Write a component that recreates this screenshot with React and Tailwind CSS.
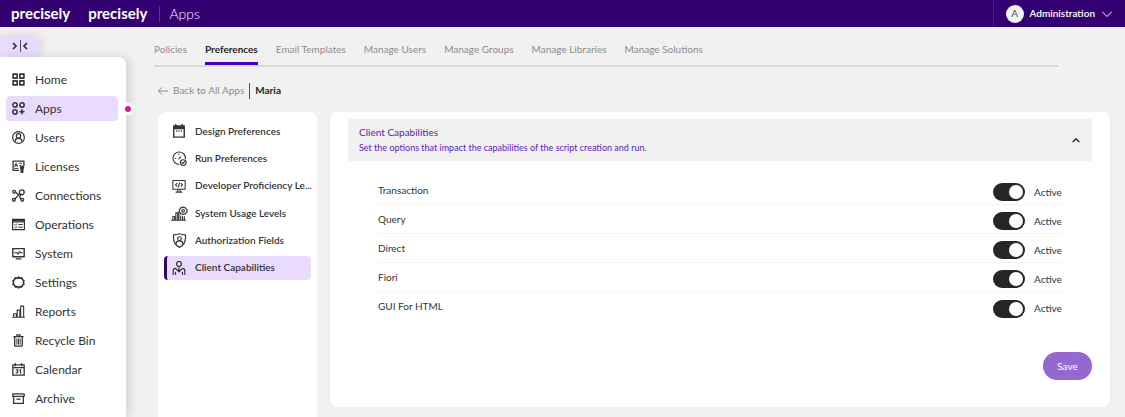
import { useState } from "react"

function Icon({ children, className = "w-[13px] h-[13px]", strokeWidth = 2.4 }) {
    return (
        <svg
            className={`shrink-0 ${className}`}
            fill="none"
            viewBox="0 0 24 24"
            stroke="currentColor"
            strokeWidth={strokeWidth}
            strokeLinecap="round"
            strokeLinejoin="round"
            aria-hidden="true"
        >
            {children}
        </svg>
    )
}

const IconHome = (
    <Icon strokeWidth={3}>
        <path d="M2 2h7.5v7.5H2zM14.5 2H22v7.5h-7.5zM2 14.5h7.5V22H2zM14.5 14.5H22V22h-7.5z" />
    </Icon>
)

const IconApps = (
    <Icon strokeWidth={2.8}>
        <circle cx="5.500" cy="5.500" r="4" />
        <circle cx="18.500" cy="5.500" r="4" />
        <circle cx="5.500" cy="18.500" r="4" />
        <path d="M18.500 14.500v7M15 18h7" />
    </Icon>
)

const IconUsers = (
    <Icon strokeWidth={2.2}>
        <circle cx="12" cy="12" r="10.800" />
        <circle cx="12" cy="9" r="4" />
        <path d="M5.500 19c1-7 12-7 13 0" />
    </Icon>
)

const IconLicenses = (
    <Icon>
        <path d="M12 19H2V2h20v8" />
        <path d="M5 12l2.500-6L10 12M6 10h3M14 6h4M14 10h2M5 15.500h6" strokeWidth={1.8} />
        <circle cx="18.500" cy="14" r="2.800" fill="currentColor" />
        <path d="M17 17.500V23l1.500-1L20 23v-5.500" fill="currentColor" />
    </Icon>
)

const IconConnections = (
    <Icon>
        <circle cx="4" cy="5" r="2.600" />
        <circle cx="18" cy="6" r="4.500" />
        <circle cx="3.500" cy="20" r="2.600" />
        <circle cx="19" cy="20" r="2.600" />
        <path d="M7 6l5 5M14.500 9L5.500 18M16.500 10.500c-3 3-3 6 .5 8" />
    </Icon>
)

const IconOperations = (
    <Icon>
        <path d="M1 2.500h22v19H1zM1 7h22" />
        <path d="M1 4.500h22" />
        <path d="M5 12l1.500 1L9 11M5 17l1.500 1L9 16M12.500 12H19M12.500 17H19" strokeWidth={1.8} />
    </Icon>
)

const IconSystem = (
    <Icon strokeWidth={2.6}>
        <path d="M1.500 3h21v15h-21zM8 22h8" />
        <path d="M5 10.500h4l2 2.500 3-4.500 2 2h3" strokeWidth={2} />
    </Icon>
)

const IconSettings = (
    <Icon strokeWidth={3}>
        <path d="M12 2l2.500 2.300 3.500-.8 1.300 3.200 2.700 1.800-1 3.500 1 3.500-2.800 1.700-1.400 3-3.400-.5L12 22 9.600 19.700l-3.400.5-1.400-3L2 15.500 3 12 2 8.500l2.700-1.800L6 3.500l3.500.8z" />
    </Icon>
)

const IconReports = (
    <Icon strokeWidth={2}>
        <path d="M1 22.500h22M3 22v-6h5v6M9.500 22V9.500h5V22M16 22V2h5.500v20" />
    </Icon>
)

const IconBin = (
    <Icon>
        <path d="M3.500 5h17M9 4.500V1.500h6v3M5 5v16c0 1 .5 1.500 1.500 1.500h11c1 0 1.500-.5 1.500-1.500V5" />
        <path d="M9 9v10M12 9v10M15 9v10" strokeWidth={1.8} />
    </Icon>
)

const IconCalendar = (
    <Icon>
        <path d="M1.500 3.500h21v19h-21zM1.500 8.500h21M6 1v4M18 1v4" />
        <path d="M7.500 12.500h3.500l-1.500 2.500c3 0 2 4-2 3M14 13.500l2-1V19" strokeWidth={2} />
    </Icon>
)

const IconArchive = (
    <Icon>
        <path d="M1.500 3.500h21v4.500h-21zM3 8v13h18V8M9 13h6" />
    </Icon>
)

const IconDesign = (
    <Icon className="w-[14px] h-[14px]">
        <path d="M3 3.500h18V22.500H3zM3 8h18M3 5.500h18M6.500 1v3M17.500 1v3" />
        <path d="M8 12h.1M12 12h.1M16 12h.1" />
    </Icon>
)

const IconRun = (
    <Icon className="w-[15px] h-[15px]" strokeWidth={1.8}>
        <path d="M11 21.500A10 10 0 1 1 21.500 12" />
        <path d="M11 12.500l3-3M5.500 12h.5M11 5.500V5" />
        <circle cx="18" cy="18.500" r="4.600" />
        <path d="M16 18.500l1.500 1.500 2.700-3" />
    </Icon>
)

const IconDeveloper = (
    <Icon className="w-[14px] h-[14px]" strokeWidth={1.8}>
        <path d="M1.500 2.500h21v15h-21zM7 22.500h10M10 18v4M14 18v4" />
        <path d="M8.500 7.500L6 10l2.500 2.500M15.500 7.500L18 10l-2.500 2.500M13 6.500l-2 7" />
    </Icon>
)

const IconUsage = (
    <svg
        className="shrink-0 w-[17px] h-[15px]"
        viewBox="0 0 28 24"
        fill="none"
        stroke="currentColor"
        strokeWidth={1.8}
        strokeLinecap="round"
        strokeLinejoin="round"
        aria-hidden="true"
    >
        <path d="M1 23h23M3 23v-6h3v6M8 23V11h3v12M13 23V9M16 16v7M19 17v6M22 17v6" />
        <circle cx="20" cy="7.500" r="2.200" />
        <path d="M20 1l1.700 1.500 2.200-.3.700 2.100 2 1.100-.8 2.100.8 2.100-2 1.100-.7 2.100-2.200-.3L20 14l-1.700-1.500-2.200.3-.7-2.100-2-1.100.8-2.100-.8-2.100 2-1.100.7-2.100 2.200.3z" />
    </svg>
)

const IconAuthorization = (
    <Icon className="w-[15px] h-[15px]" strokeWidth={1.8}>
        <path d="M12 1c3 2 6 2 9.500 2 1 9-1 16-9.500 20C3.500 19 1.500 12 2.500 3 6 3 9 3 12 1z" />
        <circle cx="12" cy="9" r="3" />
        <path d="M6.500 17c.5-6 10.500-6 11 0" />
    </Icon>
)

const IconClient = (
    <Icon className="w-[14px] h-[14px]" strokeWidth={2}>
        <circle cx="12" cy="5" r="4.200" />
        <path d="M2 23v-6c0-3 1.500-4.500 4-4.500l6 6 6-6c2.500 0 4 1.500 4 4.500v6M12 10v8M6 19.500V23M18 19.500V23M9.500 15l2.500 3 2.500-3" />
    </Icon>
)

const menu = [
    { label: "Home", icon: IconHome },
    { label: "Apps", icon: IconApps },
    { label: "Users", icon: IconUsers },
    { label: "Licenses", icon: IconLicenses },
    { label: "Connections", icon: IconConnections },
    { label: "Operations", icon: IconOperations },
    { label: "System", icon: IconSystem },
    { label: "Settings", icon: IconSettings },
    { label: "Reports", icon: IconReports },
    { label: "Recycle Bin", icon: IconBin },
    { label: "Calendar", icon: IconCalendar },
    { label: "Archive", icon: IconArchive }
]

const tabs = [
    "Policies",
    "Preferences",
    "Email Templates",
    "Manage Users",
    "Manage Groups",
    "Manage Libraries",
    "Manage Solutions"
]

const sections = [
    { label: "Design Preferences", icon: IconDesign },
    { label: "Run Preferences", icon: IconRun },
    { label: "Developer Proficiency Le...", icon: IconDeveloper },
    { label: "System Usage Levels", icon: IconUsage },
    { label: "Authorization Fields", icon: IconAuthorization },
    { label: "Client Capabilities", icon: IconClient }
]

const capabilities = ["Transaction", "Query", "Direct", "Fiori", "GUI For HTML"]

function Header() {
    return (
        <header className="h-[27px] bg-[#330072] text-white flex items-stretch justify-between">
            <div className="flex items-center pl-[11px]">
                <span className="font-bold text-[15px] leading-5 pb-[2px]">precisely</span>
                <span className="font-bold text-[15px] leading-5 pb-[2px] ml-[18px]">precisely</span>
                <span className="w-px h-4 bg-[#5c3590] ml-3 mr-[9px]" />
                <span className="text-sm font-light">Apps</span>
            </div>
            <button type="button" className="flex items-center border-l border-[#4a1d85] pl-3 pr-[13px] cursor-pointer">
                <span className="w-[18px] h-[18px] rounded-full bg-[#f2f2f2] text-gray-600 text-[10px] flex items-center justify-center">A</span>
                <span className="text-[10px] font-semibold ml-[6px] mr-[7px]">Administration</span>
                <Icon className="w-[10px] h-[10px]">
                    <path d="M1 7l11 11L23 7" />
                </Icon>
            </button>
        </header>
    )
}

function Sidebar() {
    const [actif, setActif] = useState("Apps")

    return (
        <aside className="w-[126px] shrink-0 pt-2 flex flex-col">
            <button
                type="button"
                aria-label="Collapse menu"
                className="w-[39px] h-[22px] bg-[#e9dbfd] rounded-tr-md shadow-[2px_0_8px_rgba(0,0,0,0.12)] flex items-center justify-center text-gray-800 cursor-pointer"
            >
                <svg className="w-4 h-3" viewBox="0 0 16 12" fill="none" stroke="currentColor" aria-hidden="true">
                    <path d="M1 3l3 3-3 3M15 3l-3 3 3 3" strokeWidth="1.600" />
                    <path d="M8.500 0v12" strokeWidth="0.800" />
                </svg>
            </button>
            <nav className="grow bg-white rounded-tr-lg shadow-[4px_0_10px_rgba(0,0,0,0.12)] pt-[10px] pl-[6px] pr-2 flex flex-col gap-1">
                {menu.map(({ label, icon }) => (
                    <a
                        key={label}
                        href="#"
                        onClick={() => setActif(label)}
                        className={`relative h-[25px] flex items-center gap-[10px] pl-[6px] rounded text-xs text-[#333] ${label === actif ? "bg-[#e9dbfd]" : ""}`}
                    >
                        {icon}
                        {label}
                        {label === actif && (
                            <span className="absolute -right-4 w-3 h-3 rounded-full bg-white flex items-center justify-center">
                                <span className="w-[6px] h-[6px] rounded-full bg-[#cc1f8f]" />
                            </span>
                        )}
                    </a>
                ))}
            </nav>
        </aside>
    )
}

function Capability({ label }) {
    const [active, setActive] = useState(true)
    const id = label.toLowerCase().replaceAll(" ", "-")

    return (
        <div className="h-[29px] flex items-center justify-between border-b border-[#f4f4f4] last:border-b-0">
            <label htmlFor={id}>{label}</label>
            <div className="flex items-center gap-[9px] pt-1">
                <input
                    id={id}
                    type="checkbox"
                    checked={active}
                    onChange={(e) => setActive(e.target.checked)}
                    className="appearance-none w-8 h-[18px] rounded-full bg-gray-400 checked:bg-[#262626] p-[2px] flex checked:justify-end cursor-pointer before:block before:w-[14px] before:h-[14px] before:rounded-full before:bg-white"
                />
                <span className="w-[29px]">{active ? "Active" : "Inactive"}</span>
            </div>
        </div>
    )
}

export default function App() {
    const [onglet, setOnglet] = useState("Preferences")
    const [section, setSection] = useState("Client Capabilities")
    const [open, setOpen] = useState(true)

    return (
        <div className="h-screen overflow-hidden flex flex-col bg-[#f1f1f1] font-['Lato',sans-serif] text-[10px] text-[#333]">
            <Header />

            <div className="grow min-h-0 flex">
                <Sidebar />

                <main className="grow min-w-0 flex flex-col pl-7 pr-[15px]">
                    {/* Tabs */}
                    <nav className="flex gap-[18px] h-10 border-b-2 border-[#d9d9d9] mr-[52px]">
                        {tabs.map((tab) => (
                            <a
                                key={tab}
                                href="#"
                                onClick={() => setOnglet(tab)}
                                className={`flex items-center h-[38px] pt-[10px] border-b-[3px] whitespace-nowrap ${tab === onglet ? "border-[#4b00b8] font-bold text-[#262626]" : "border-transparent text-[#8c8c8c]"}`}
                            >
                                {tab}
                            </a>
                        ))}
                    </nav>

                    {/* Breadcrumb */}
                    <div className="flex items-center h-[45px] pl-1 pt-[2px]">
                        <a href="#" className="flex items-center gap-[5px] text-[#8c8c8c]">
                            <Icon className="w-[10px] h-[10px]">
                                <path d="M9 4l-8 8 8 8M1 12h22" />
                            </Icon>
                            Back to All Apps
                        </a>
                        <span className="w-px h-4 bg-[#555] mx-[5px]" />
                        <span className="font-bold text-[#262626]">Maria</span>
                    </div>

                    <div className="grow min-h-0 flex gap-[13px] pl-1">
                        {/* Preference sections */}
                        <nav className="w-[159px] shrink-0 bg-white rounded-t-lg px-[6px] pt-[7px]">
                            <div className="h-[161px] flex flex-col justify-between">
                                {sections.map(({ label, icon }) => (
                                    <a
                                        key={label}
                                        href="#"
                                        onClick={() => setSection(label)}
                                        className={`h-6 flex items-center rounded border-l-[3px] pl-1 font-semibold whitespace-nowrap ${label === section ? "bg-[#e9dbfd] border-[#330072]" : "border-transparent"}`}
                                    >
                                        <span className="w-4 shrink-0 mr-2 flex justify-center">{icon}</span>
                                        {label}
                                    </a>
                                ))}
                            </div>
                        </nav>

                        <section className="grow min-w-0 mb-[10px] bg-white rounded-lg px-[18px] pt-[7px]">
                            <button
                                type="button"
                                aria-expanded={open}
                                onClick={() => setOpen(!open)}
                                className="w-full h-[42px] bg-[#f1f1f1] pl-[11px] pr-3 flex items-center justify-between text-left text-[#5f1bb3] cursor-pointer"
                            >
                                <span>
                                    <span className="block leading-4">Client Capabilities</span>
                                    <span className="block leading-4 text-[9px]">
                                        Set the options that impact the capabilities of the script creation and run.
                                    </span>
                                </span>
                                <Icon className="w-2 h-2 text-[#262626]" strokeWidth={4}>
                                    <path d="M3 17l9-9 9 9" />
                                </Icon>
                            </button>

                            {open && (
                                <div className="pl-[30px] pr-[29px] pt-[15px]">
                                    {capabilities.map((label) => <Capability key={label} label={label} />)}
                                </div>
                            )}

                            <div className="flex justify-end mt-[31px]">
                                <button type="button" className="w-[49px] h-7 rounded-full bg-[#9369cf] text-white cursor-pointer">
                                    Save
                                </button>
                            </div>
                        </section>
                    </div>
                </main>
            </div>
        </div>
    )
}
